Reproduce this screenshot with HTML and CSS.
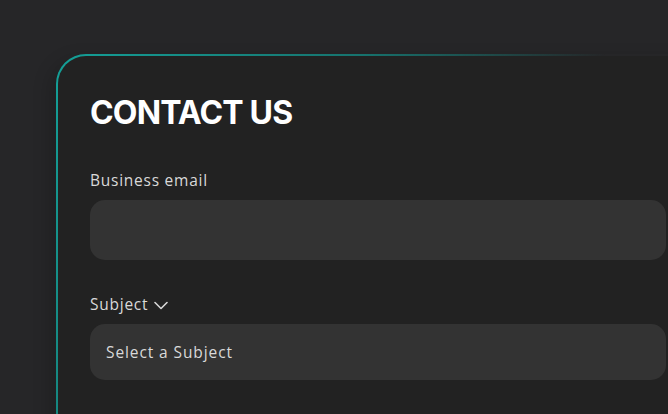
FILE: index.html
```html
<!DOCTYPE html>
<html lang="en">
<head>
<meta charset="utf-8">
<title>Contact us</title>
<link rel="stylesheet" href="styles.css">
</head>
<body>
<main class="page">
  <section class="card">
    <h1 class="title">CONTACT US</h1>
    <form class="form">
      <div class="field">
        <label class="label" for="email">Business email</label>
        <input class="input input-email" id="email" type="email">
      </div>
      <div class="field field-subject">
        <label class="label" for="subject">Subject
          <svg class="chev" width="14" height="9" viewBox="0 0 14 9" aria-hidden="true"><path d="M1 1.5 L7 7.5 L13 1.5" fill="none" stroke="#d6d6d6" stroke-width="1.6" stroke-linecap="round" stroke-linejoin="round"/></svg>
        </label>
        <div class="input input-select" id="subject">Select a Subject</div>
      </div>
    </form>
  </section>
</main>
</body>
</html>
```

FILE: styles.css
```css
* { box-sizing: border-box; }
html, body { margin: 0; height: 100%; }
body {
  background: #262628;
  font-family: "Open Sans", "Inter", sans-serif;
  overflow: hidden;
}
.page {
  padding: 54px 0 0 56px;
}
.card {
  width: 644px;
  height: 520px;
  border: 2px solid transparent;
  border-radius: 30px;
  background:
    linear-gradient(#222222, #222222) padding-box,
    linear-gradient(115deg, #14a098 0%, #17726d 35%, rgba(34,34,34,0) 62%) border-box;
  padding: 37px 32px 0 32px;
  box-shadow: -6px 6px 18px rgba(0,0,0,0.18);
}
.title {
  margin: 0;
  color: #ffffff;
  font-family: "Inter", sans-serif;
  font-weight: 700;
  font-size: 32px;
  line-height: 40px;
  letter-spacing: -0.85px;
}
.form {
  margin-top: 37px;
  display: flex;
  flex-direction: column;
  gap: 34px;
}
.field {
  display: flex;
  flex-direction: column;
  gap: 10px;
}
.label {
  color: #d9d9d9;
  font-size: 15.5px;
  line-height: 20px;
  letter-spacing: 0.75px;
  display: flex;
  align-items: center;
  gap: 6px;
}
.chev { margin-top: 2px; }
.input {
  display: block;
  width: 100%;
  border: none;
  outline: none;
  background: #333333;
  border-radius: 15px;
  color: #d9d9d9;
  font-family: inherit;
  font-size: 15.5px;
  letter-spacing: 0.9px;
}
.input-email { height: 60px; }
.input-select {
  height: 56px;
  padding: 0 16px;
  display: flex;
  align-items: center;
}
```
